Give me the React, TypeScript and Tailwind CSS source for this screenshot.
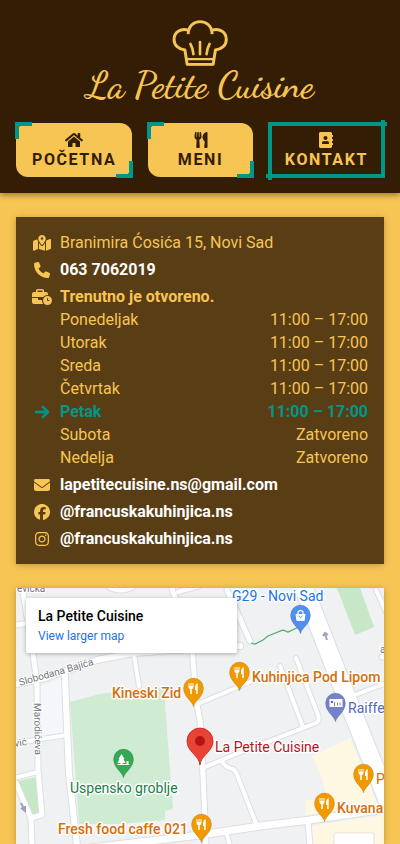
import type { ReactNode } from "react";
import { FaAddressBook, FaHome, FaUtensils } from "react-icons/fa";
import {
  FaArrowRight,
  FaBusinessTime,
  FaEnvelope,
  FaFacebook,
  FaInstagram,
  FaMapLocationDot,
  FaPhone,
} from "react-icons/fa6";

const hours = [
  { day: "Ponedeljak", time: "11:00 – 17:00" },
  { day: "Utorak", time: "11:00 – 17:00" },
  { day: "Sreda", time: "11:00 – 17:00" },
  { day: "Četvrtak", time: "11:00 – 17:00" },
  { day: "Petak", time: "11:00 – 17:00", today: true },
  { day: "Subota", time: "Zatvoreno" },
  { day: "Nedelja", time: "Zatvoreno" },
];

function ChefHat() {
  return (
    <svg
      viewBox="305 62 170 143"
      className="h-[47px] w-14"
      fill="none"
      stroke="#f7c553"
      strokeWidth="9"
      aria-hidden="true"
    >
      <path
        strokeLinejoin="round"
        d="M354 105C355 80 371 67 390 67C410 67 426 80 427 105M354 93C331 86 311 100 311 121C311 139 325 151 344 153L351 197H430L437 153C456 151 470 139 470 121C470 100 450 86 427 93"
      />
      <path strokeWidth="7" d="M349 181H432M352 196H430" />
      <path strokeWidth="8" strokeLinecap="round" d="M361 135Q368 147 370 166M390 129V166M419 135Q412 147 410 166" />
    </svg>
  );
}

function NavItem({ icon, label, active }: { icon: ReactNode; label: string; active?: boolean }) {
  return (
    <a
      href="#"
      aria-current={active ? "page" : undefined}
      className={`relative flex flex-1 flex-col items-center px-4 py-2 text-base leading-[19px] font-bold tracking-widest ${
        active ? "text-[#f7c553]" : "rounded-xl bg-[#f7c553] text-[#331d05]"
      }`}
    >
      <span
        className={`absolute -top-px -left-px border-t-4 border-l-4 border-[#009688] ${
          active ? "h-[calc(100%+4px)] w-[calc(100%+4px)]" : "size-[17px]"
        }`}
      />
      <span className="flex h-[19px] items-start pt-px">{icon}</span>
      <span>{label}</span>
      <span
        className={`absolute -right-px -bottom-px border-r-4 border-b-4 border-[#009688] ${
          active ? "h-[calc(100%+4px)] w-[calc(100%+4px)]" : "size-[17px]"
        }`}
      />
    </a>
  );
}

function Row({ icon, children }: { icon: ReactNode; children: ReactNode }) {
  return (
    <div className="flex items-center gap-2">
      <span className="flex w-5 justify-center">{icon}</span>
      {children}
    </div>
  );
}

const roads: { d: string; w: number }[] = [
  { d: "M22 586L33 653L37 685L38 770L42 815L31 818L16 783", w: 5 },
  { d: "M16 625L30 623", w: 5 },
  { d: "M16 684L45 678L97 660L133 653L200 648L240 646", w: 6 },
  { d: "M134 655L139 686", w: 4 },
  { d: "M65 676L66 704L69 774L77 846", w: 6 },
  { d: "M16 743L67 735", w: 4 },
  { d: "M14 778L38 772", w: 4 },
  { d: "M31 818L32 846", w: 5 },
  { d: "M171 586L192 646L196 700L200 720L203 774L206 846", w: 5 },
  { d: "M108 586Q120 594 134 586", w: 5 },
  { d: "M178 592L200 586", w: 4 },
  { d: "M200 703L252 681", w: 4 },
  { d: "M203 768L231 756L316 723Q320 721 318 715L313 702L296 658", w: 4 },
  { d: "M280 666L303 727", w: 4 },
  { d: "M222 761Q224 767 233 769Q236 771 238 777L257 826", w: 4 },
  { d: "M90 848L200 835L260 826L310 820L386 809", w: 7 },
  { d: "M308 822L310 846", w: 5 },
  { d: "M227 835L230 846", w: 4 },
  { d: "M303 586L352 711L390 806", w: 18 },
  { d: "M355 695L386 683", w: 4 },
  { d: "M227 590L250 641", w: 5 },
  { d: "M376 590L388 616", w: 4 },
  { d: "M386 655L382 657", w: 5 },
];

function Pin({ x, y, color, children }: { x: number; y: number; color: string; children: ReactNode }) {
  return (
    <g transform={`translate(${x} ${y})`}>
      <path
        d="M0 18C-1 12 -10 8 -10 -1A10 10 0 1 1 10 -1C10 8 1 12 0 18Z"
        fill={color}
        stroke="#00000033"
        strokeWidth="0.6"
      />
      {children}
    </g>
  );
}

function FoodPin({ x, y }: { x: number; y: number }) {
  return (
    <Pin x={x} y={y} color="#f29900">
      <path d="M-5 -6V-2Q-5 0 -3.300 0V5H-1.700V0Q0 0 0 -2V-6H-1V-3H-2V-6H-3V-3H-4V-6ZM4.200 -6Q1.500 -5 1.500 -1V1H2.700V5H4.200Z" fill="white" />
    </Pin>
  );
}

function MapLabel({ x, y, color, children, bold }: { x: number; y: number; color: string; children: string; bold?: boolean }) {
  return (
    <text
      x={x}
      y={y}
      fill={color}
      stroke="white"
      strokeWidth="3"
      strokeLinejoin="round"
      paintOrder="stroke"
      className={bold ? "text-[14px] font-medium" : "text-[14px]"}
    >
      {children}
    </text>
  );
}

function StreetMap() {
  return (
    <svg
      viewBox="16 588 368 256"
      preserveAspectRatio="xMidYMin slice"
      className="absolute inset-0 size-full"
      role="img"
      aria-label="Mapa"
    >
      <rect x="16" y="588" width="368" height="256" fill="#f0f1f3" />
      <path d="M40 686L64 678L66 733L40 737Z" fill="#f5f6f9" />
      <path d="M70 702L100 694L150 688H165V704L173 809L165 811V820L120 824H79Z" fill="#cfebd2" />
      <path d="M18 781L37 777L39 813L33 815Z" fill="#c6e8c6" />
      <path d="M337 588H360L374 627L355 635Z" fill="#c6e8c6" />
      <path d="M312 756L350 738L377 804L306 815L305 801L327 797L320 773Z" fill="#fef7e2" />
      <path d="M312 826L384 815V844H312Z" fill="#fef7e2" />
      <g fill="none" stroke="#dcdee2" strokeLinecap="round" strokeLinejoin="round">
        {roads.map((r) => (
          <path key={r.d} d={r.d} strokeWidth={r.w + 2} />
        ))}
      </g>
      <g fill="none" stroke="white" strokeLinecap="round" strokeLinejoin="round">
        {roads.map((r) => (
          <path key={r.d} d={r.d} strokeWidth={r.w} />
        ))}
      </g>
      <path d="M251 643L255 644L263 640L268 636L283 630L288 632L301 626" fill="none" stroke="#4caf68" strokeWidth="1.2" />
      <g fill="none" stroke="#9aa6b8" strokeWidth="2">
        <path d="M327 640L325 634M323 636L325 633L328 635" />
        <path d="M21 803L24 809M21 808L25 811L25 806" />
      </g>
      <g fill="#73777c" stroke="white" strokeWidth="2" paintOrder="stroke" className="text-[10px]">
        <text x="17" y="592">evićka</text>
        <text transform="translate(20 686) rotate(-16)">Slobodana Bajića</text>
        <text transform="translate(34 703) rotate(89)">Marodićeva</text>
        <text transform="translate(15 747) rotate(-10)">vić</text>
        <text x="380" y="653">a</text>
      </g>
      <MapLabel x={232} y={601} color="#1a73e8">G29 - Novi Sad</MapLabel>
      <MapLabel x={112} y={698} color="#d56e0c" bold>Kineski Zid</MapLabel>
      <MapLabel x={252} y={682} color="#d56e0c" bold>Kuhinjica Pod Lipom</MapLabel>
      <MapLabel x={348} y={713} color="#5566c4">Raiffeisen</MapLabel>
      <MapLabel x={215} y={752} color="#b3141c">La Petite Cuisine</MapLabel>
      <MapLabel x={70} y={793} color="#188048">Uspensko groblje</MapLabel>
      <MapLabel x={58} y={834} color="#d56e0c" bold>Fresh food caffe 021</MapLabel>
      <MapLabel x={337} y={813} color="#d56e0c" bold>Kuvana</MapLabel>
      <MapLabel x={376} y={784} color="#d56e0c">P</MapLabel>
      <Pin x={300.500} y={616} color="#4f8ff0">
        <path d="M-5 -2H5L4 5H-4Z" fill="white" />
        <path d="M-2.500 -2V-4Q0 -7 2.500 -4V-2" fill="none" stroke="white" strokeWidth="1.3" />
        <path d="M-2 0Q0 3 2 0" fill="none" stroke="#4f8ff0" />
      </Pin>
      <Pin x={335.500} y={704} color="#7382cb">
        <rect x="-6" y="-5" width="13" height="8" fill="white" />
        <circle cx="-3.500" cy="-2" r="1.200" fill="#5566c4" />
        <path d="M-1 -2V2M2 -1.500V1.500M4.500 -1.500V1.500" stroke="#7382cb" />
      </Pin>
      <Pin x={123.500} y={760} color="#34a853">
        <path d="M-2 -6L1 -1H0L2 3H-1V4H6V5H-6V4H-3V3H-6L-4 -1H-5ZM3 4V1H5V4Z" fill="white" />
      </Pin>
      <FoodPin x={193.500} y={689} />
      <FoodPin x={239.500} y={673} />
      <FoodPin x={363.500} y={775} />
      <FoodPin x={324.500} y={804} />
      <FoodPin x={201.500} y={825} />
      <path d="M200 765C199 755 187 752 187 741A13 13 0 1 1 213 741C213 752 201 755 200 765Z" fill="#ea4335" stroke="#c5221f" strokeWidth="0.8" />
      <circle cx="200" cy="741" r="5" fill="#b31412" />
      <rect x="334" y="833" width="40" height="20" rx="2" fill="white" stroke="#00000018" />
    </svg>
  );
}

export default function App() {
  return (
    <div className="flex min-h-screen flex-col bg-[#f7c553] font-[Roboto,sans-serif] text-base leading-[19px] text-[#f7c553]">
      <header className="bg-[#331d05] px-4 pt-5 pb-4 shadow-[0_2px_6px_rgba(0,0,0,0.4)]">
        <a href="#" className="flex flex-col items-center">
          <ChefHat />
          <span className="font-['Dancing_Script','Liberation_Serif',cursive] text-[37px] leading-[37px] pb-[3px] font-semibold">
            La Petite Cuisine
          </span>
        </a>
        <nav className="mt-4 flex gap-4">
          <NavItem icon={<FaHome className="h-4 w-[18px]" />} label="POČETNA" />
          <NavItem icon={<FaUtensils />} label="MENI" />
          <NavItem icon={<FaAddressBook />} label="KONTAKT" active />
        </nav>
      </header>
      <main className="flex flex-1 flex-col gap-6 px-4 pt-6">
        <section className="flex flex-col gap-2 bg-[#593e15] p-4 shadow-[0_1px_6px_rgba(0,0,0,0.25)]">
          <Row icon={<FaMapLocationDot className="h-4 w-[18px]" />}>
            <span>Branimira Ćosića 15, Novi Sad</span>
          </Row>
          <Row icon={<FaPhone />}>
            <a href="tel:0637062019" className="font-bold text-white">063 7062019</a>
          </Row>
          <div>
            <Row icon={<FaBusinessTime className="h-4 w-5" />}>
              <h2 className="font-bold">Trenutno je otvoreno.</h2>
            </Row>
            <table className="w-full border-collapse">
              <tbody>
                {hours.map((h) => (
                  <tr key={h.day} className={h.today ? "font-bold text-[#009688]" : ""}>
                    <td className="w-7 p-0 pt-1">
                      <span className="flex w-5 justify-center">
                        {h.today && <FaArrowRight className="stroke-[24]" />}
                      </span>
                    </td>
                    <th scope="row" className={`p-0 pt-1 text-left ${h.today ? "font-bold" : "font-normal"}`}>
                      {h.day}
                    </th>
                    <td className="p-0 pt-1 text-right">{h.time}</td>
                  </tr>
                ))}
              </tbody>
            </table>
          </div>
          <Row icon={<FaEnvelope />}>
            <a href="mailto:lapetitecuisine.ns@gmail.com" className="font-bold text-white">
              lapetitecuisine.ns@gmail.com
            </a>
          </Row>
          <Row icon={<FaFacebook />}>
            <a href="#" className="font-bold text-white">@francuskakuhinjica.ns</a>
          </Row>
          <Row icon={<FaInstagram />}>
            <a href="#" className="font-bold text-white">@francuskakuhinjica.ns</a>
          </Row>
        </section>
        <section className="relative min-h-64 flex-1 overflow-hidden shadow-[0_1px_6px_rgba(0,0,0,0.25)]">
          <StreetMap />
          <div className="absolute top-2.5 left-2.5 w-[211px] rounded-xs bg-white px-3 pt-2 pb-1.5 shadow-[0_1px_4px_rgba(0,0,0,0.3)]">
            <p className="text-sm leading-5 font-medium text-black">La Petite Cuisine</p>
            <a href="#" className="block text-xs leading-[21px] text-[#1a73e8]">View larger map</a>
          </div>
        </section>
      </main>
    </div>
  );
}
